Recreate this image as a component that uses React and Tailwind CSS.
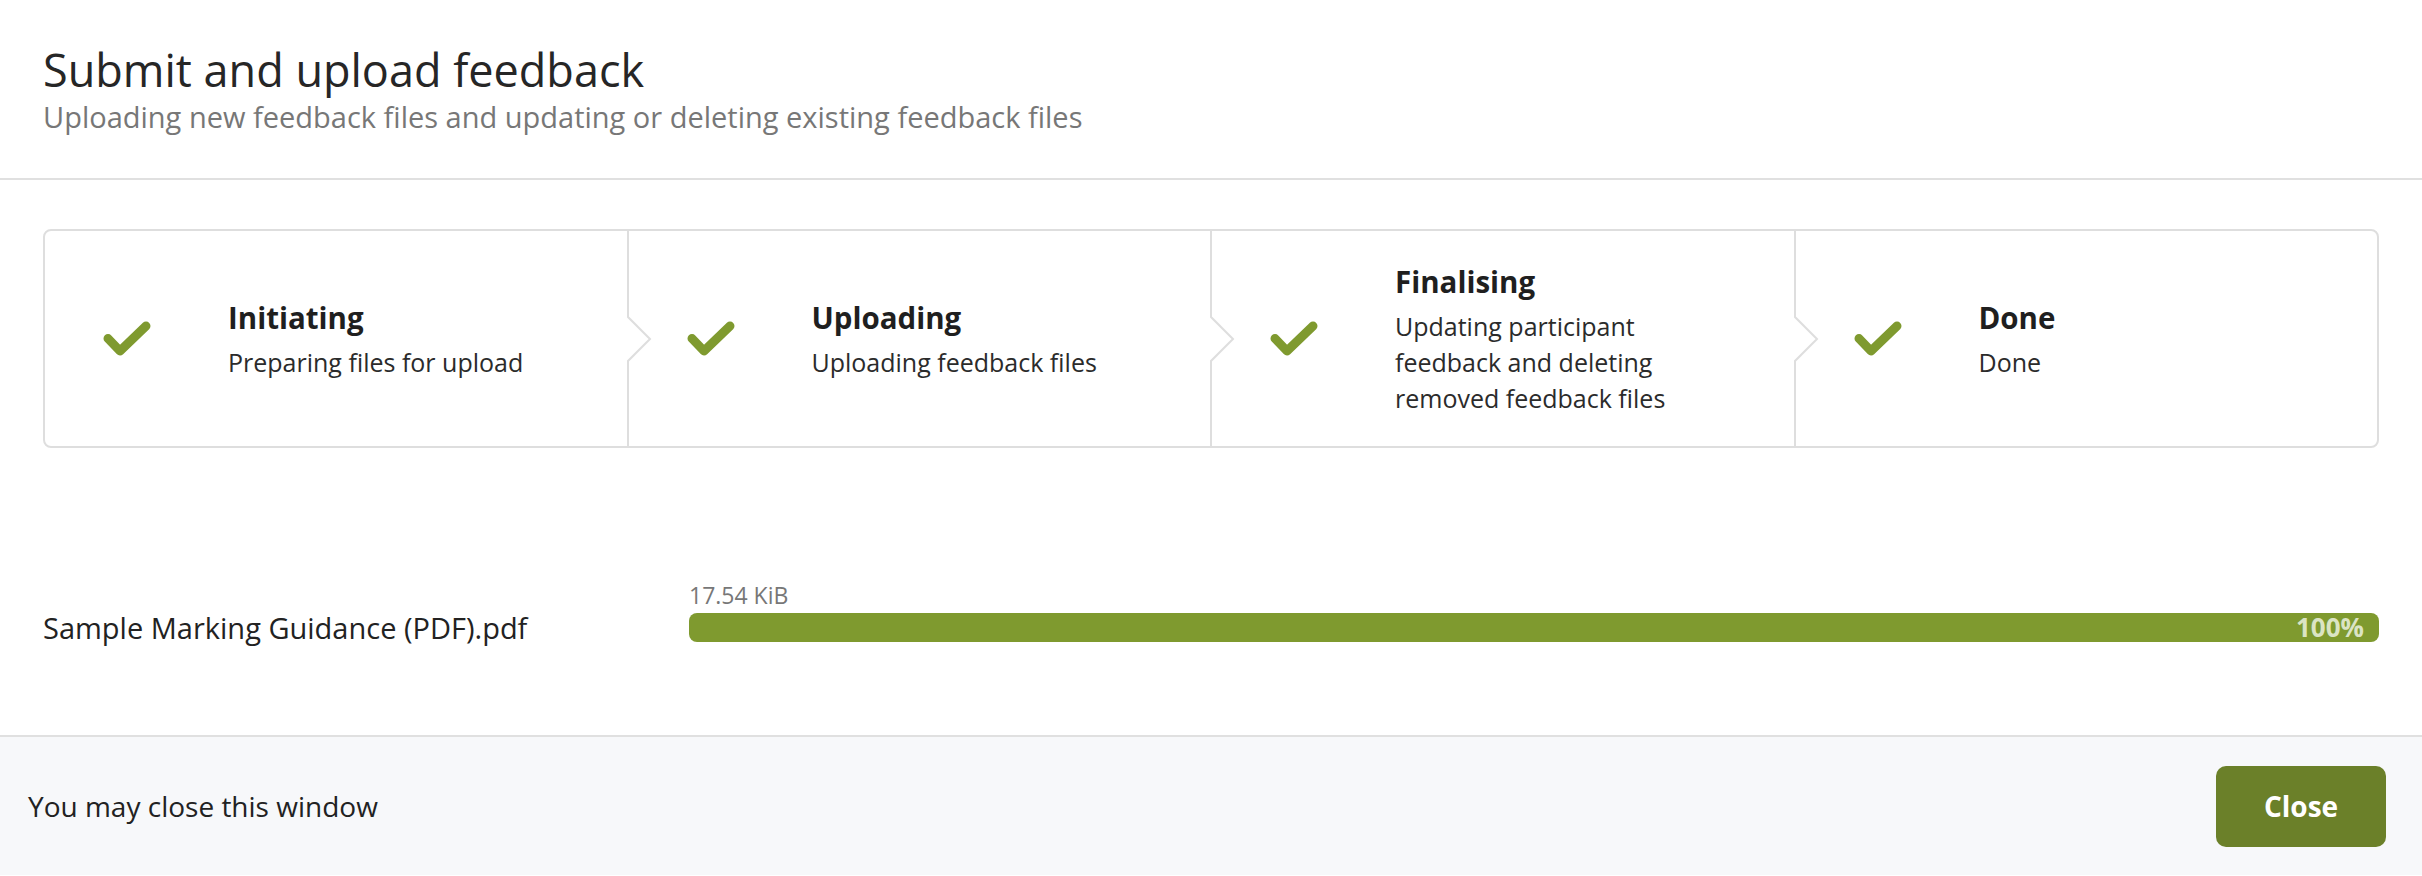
import React from 'react'

const steps = [
  { title: 'Initiating', desc: 'Preparing files for upload' },
  { title: 'Uploading', desc: 'Uploading feedback files' },
  { title: 'Finalising', desc: 'Updating participant feedback and deleting removed feedback files' },
  { title: 'Done', desc: 'Done' },
]

const Check = () => (
  <svg width="48" height="36" viewBox="0 0 48 36" className="shrink-0">
    <polyline
      points="5,17.5 17,30 43,5"
      fill="none"
      stroke="#7f9a2f"
      strokeWidth="9"
      strokeLinecap="round"
      strokeLinejoin="round"
    />
  </svg>
)

const Chevron = () => (
  <svg
    width="28"
    height="50"
    viewBox="0 0 28 50"
    className="absolute left-[-3px] top-1/2 -translate-y-1/2"
  >
    <rect x="0" y="2" width="6" height="46" fill="#ffffff" />
    <polyline
      points="2,0 2,3 24,25 2,47 2,50"
      fill="none"
      stroke="#dedede"
      strokeWidth="2"
    />
  </svg>
)

const Step = ({ step, first }) => (
  <div
    className={
      first
        ? 'relative flex-1 flex items-center pl-[58px]'
        : 'relative flex-1 flex items-center pl-[58px] border-l-2 border-[#dedede]'
    }
  >
    {!first && <Chevron />}
    <Check />
    <div className="ml-[77px] max-w-[300px]">
      <div className="text-[29.5px] leading-[40px] mb-[6px] font-bold text-[#1f1f1f]">{step.title}</div>
      <div className="text-[25px] leading-[36px] text-[#2b2b2b]">{step.desc}</div>
    </div>
  </div>
)

export default function App() {
  return (
    <div className="w-full bg-white font-['Open_Sans','Noto_Sans',sans-serif] text-[#222]">
      <div className="px-[43px] pt-[44px] pb-[44px] border-b-2 border-[#e0e0e0]">
        <h1 className="text-[45px] leading-[52px] text-[#262626]">Submit and upload feedback</h1>
        <p className="mt-[4px] text-[29px] leading-[34px] text-[#777]">
          Uploading new feedback files and updating or deleting existing feedback files
        </p>
      </div>

      <div className="px-[43px] pt-[49px] pb-[93px]">
        <div className="flex h-[219px] border-2 border-[#dedede] rounded-[8px]">
          {steps.map((s, i) => (
            <Step key={s.title} step={s} first={i === 0} />
          ))}
        </div>

        <div className="mt-[135px] flex items-end">
          <div className="w-[646px] h-[29px] flex items-center text-[29px] text-[#222]">
            Sample Marking Guidance (PDF).pdf
          </div>
          <div className="flex-1 flex flex-col">
            <div className="text-[23px] leading-[24px] text-[#777] mb-[6px]">17.54 KiB</div>
            <div className="h-[29px] rounded-[8px] bg-[#7f9a2f] flex items-center justify-end pr-[15px]">
              <span className="text-[26px] leading-[29px] font-bold text-[#dbe4c4]">100%</span>
            </div>
          </div>
        </div>
      </div>

      <div className="h-[140px] border-t-2 border-[#e0e0e0] bg-[#f7f8fa] flex items-center justify-between pl-[28px] pr-[36px]">
        <span className="text-[28px] text-[#222]">You may close this window</span>
        <button className="w-[170px] h-[81px] rounded-[10px] bg-[#6b8029] text-white text-[28px] font-bold">
          Close
        </button>
      </div>
    </div>
  )
}
